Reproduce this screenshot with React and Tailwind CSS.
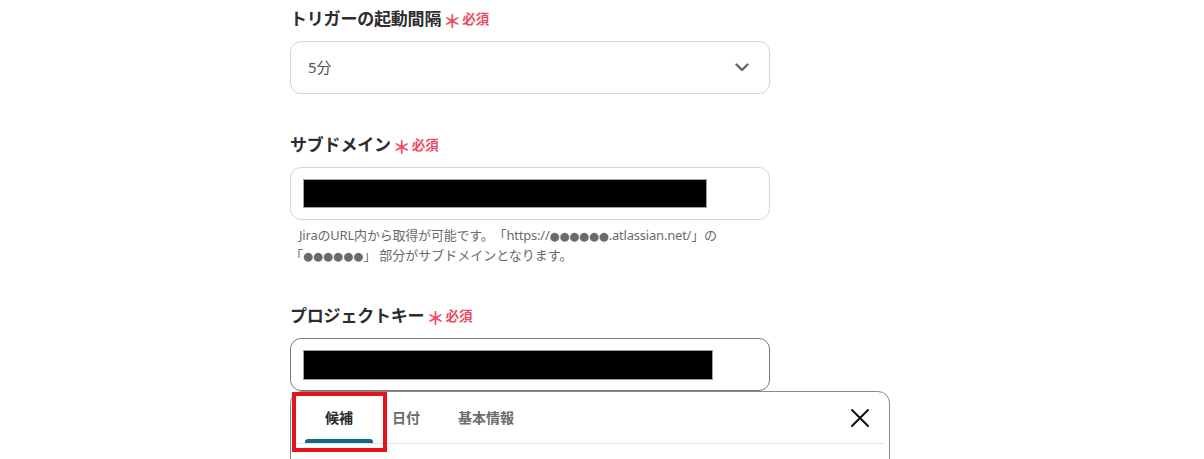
import React from "react";

const jp = { fontFamily: '"Noto Sans", "Noto Sans CJK JP", sans-serif' };
const dots = { fontFamily: '"DejaVu Sans", sans-serif', fontSize: "11.5px" };

function Label({ children }) {
  return (
    <div className="flex items-center h-6">
      <span className="text-[17px] font-bold text-[#2d2d2d] leading-6 tracking-[-0.2px]">{children}</span>
      <span className="ml-[2px] text-[18px] font-bold text-[#f04a63] leading-6 mt-[3px]">＊</span>
      <span className="ml-[1px] text-[13.5px] font-bold text-[#f04a63] leading-6">必須</span>
    </div>
  );
}

export default function App() {
  return (
    <div className="w-[1204px] h-[459px] bg-white overflow-hidden [text-spacing-trim:space-all]" style={jp}>
      <div className="ml-[290px] w-[600px] pt-[7px]">
        <Label>トリガーの起動間隔</Label>
        <div className="mt-[10px] w-[480px] h-[53px] rounded-[11px] border border-[#d5d5dc] flex items-center justify-between pl-[17px] pr-[20px]">
          <span className="text-[15px] text-[#555]">5分</span>
          <svg width="14" height="9" viewBox="0 0 14 9" fill="none">
            <path d="M1.5 1.5 L7 7 L12.5 1.5" stroke="#666" strokeWidth="2.4" strokeLinecap="round" strokeLinejoin="round" />
          </svg>
        </div>

        <div className="mt-[39px]">
          <Label>サブドメイン</Label>
        </div>
        <div className="mt-[10px] w-[480px] h-[53px] rounded-[11px] border border-[#d5d5dc] flex items-center pl-[12px]">
          <div className="w-[404px] h-[29px] bg-black border border-[#a0a0a0]" />
        </div>
        <div className="mt-[6px] pl-[9px] text-[13px] leading-[19px] text-[#6a6a6a] [text-spacing-trim:space-all]">
          <div className="tracking-[-0.2px]">JiraのURL内から取得が可能です。「https://<span style={dots}>●●●●●●</span>.atlassian.net/」の</div>
          <div className="-ml-[9px]">「<span style={dots}>●●●●●●</span>」<span className="ml-[3px]">部分がサブドメインとなります。</span></div>
        </div>

        <div className="mt-[38px]">
          <Label>プロジェクトキー</Label>
        </div>
        <div className="mt-[10px] w-[480px] h-[53px] rounded-[11px] border border-[#7a7a7a] flex items-center pl-[12px]">
          <div className="w-[410px] h-[30px] bg-black border border-[#a0a0a0]" />
        </div>

        <div className="relative w-[600px] h-[80px] border border-[#8a8a8a] rounded-t-[12px] bg-white">
          <div className="flex items-end justify-between h-[52px] mx-[5px] border-b border-[#e2e2e2]">
            <div className="flex items-end h-full pl-[9px]">
              <div className="relative h-full flex items-center px-[20px]">
                <span className="text-[14px] font-bold text-[#2a2a2a]">候補</span>
                <div className="absolute left-0 right-0 bottom-0 h-[4px] bg-[#0e6b82] rounded-t-[3px]" />
              </div>
              <div className="h-full flex items-center px-[19px]">
                <span className="text-[14px] font-bold text-[#6b6b6b]">日付</span>
              </div>
              <div className="h-full flex items-center px-[19px]">
                <span className="text-[14px] font-bold text-[#6b6b6b]">基本情報</span>
              </div>
            </div>
            <div className="h-full flex items-center pr-[14px]">
              <svg width="20" height="20" viewBox="0 0 20 20" fill="none">
                <path d="M2 2 L18 18 M18 2 L2 18" stroke="#111" strokeWidth="2" strokeLinecap="round" />
              </svg>
            </div>
          </div>
          <div className="absolute left-[1px] top-[0px] w-[95px] h-[60px] border-[4px] border-[#e3141b]" />
        </div>
      </div>
    </div>
  );
}
